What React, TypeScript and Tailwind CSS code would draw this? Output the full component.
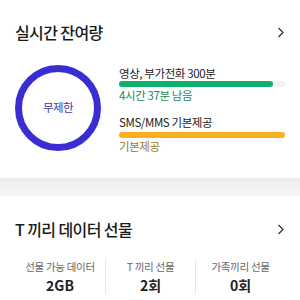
import React from 'react';

// Chevron used on section headers
const Chevron: React.FC = () => (
  <svg width="8" height="11" viewBox="0 0 8 11" fill="none" className="shrink-0">
    <path d="M1.5 1L6 5.5L1.5 10" stroke="#333" strokeWidth="1.3" />
  </svg>
);

const SectionTitle: React.FC<{ title: string }> = ({ title }) => (
  <div className="flex items-center justify-between">
    <h2 className="text-[16px] leading-[24px] font-medium tracking-[-0.6px] text-[#1a1a1a]">{title}</h2>
    <Chevron />
  </div>
);

const UsageBar: React.FC<{ percent: number; color: string }> = ({ percent, color }) => (
  <div className="h-[6px] w-full rounded-full bg-[#f1f1f1]">
    <div className={`h-full rounded-full ${color}`} style={{ width: `${percent}%` }} />
  </div>
);

const stats = [
  { label: '선물 가능 데이터', value: '2GB' },
  { label: 'T 끼리 선물', value: '2회' },
  { label: '가족끼리 선물', value: '0회' },
];

export default function App() {
  return (
    <div className="w-[300px] h-[300px] overflow-hidden bg-white font-['Noto_Sans_CJK_KR',sans-serif]">
      {/* 실시간 잔여량 */}
      <section className="px-[15px] pt-[20px] pb-[24px]">
        <SectionTitle title="실시간 잔여량" />
        <div className="mt-[21px] flex items-start gap-[18px]">
          <div className="flex h-[86px] w-[86px] shrink-0 items-center justify-center rounded-full border-[7px] border-[#3a2dd2]">
            <span className="text-[11.5px] tracking-[-0.5px] text-[#4338a8]">무제한</span>
          </div>
          <div className="flex-1 text-[11.5px] leading-[16px] tracking-[-0.4px]">
            <p className="text-[#222]">영상, 부가전화 300분</p>
            <UsageBar percent={93} color="bg-[#0eb06a]" />
            <p className="text-[#1f8a55]">4시간 37분 남음</p>
            <p className="mt-[11px] text-[#222]">SMS/MMS 기본제공</p>
            <div className="mt-[2px]">
              <UsageBar percent={100} color="bg-[#fbb020]" />
            </div>
            <p className="text-[#9a7a1c]">기본제공</p>
          </div>
        </div>
      </section>

      <div className="h-[18px] bg-gradient-to-b from-[#ebebeb] to-[#f8f8f8]" />

      {/* T 끼리 데이터 선물 */}
      <section className="px-[15px] pt-[21px]">
        <SectionTitle title="T 끼리 데이터 선물" />
        <div className="mt-[18px] grid grid-cols-3">
          {stats.map((s, i) => (
            <div
              key={s.label}
              className={`flex flex-col items-center ${i > 0 ? 'border-l border-[#e6e6e6]' : ''}`}
            >
              <span className="text-[10.5px] leading-[16px] tracking-[-0.3px] text-[#666]">{s.label}</span>
              <span className="mt-[1px] text-[14px] leading-[18px] font-bold text-[#222]">{s.value}</span>
            </div>
          ))}
        </div>
      </section>
    </div>
  );
}
